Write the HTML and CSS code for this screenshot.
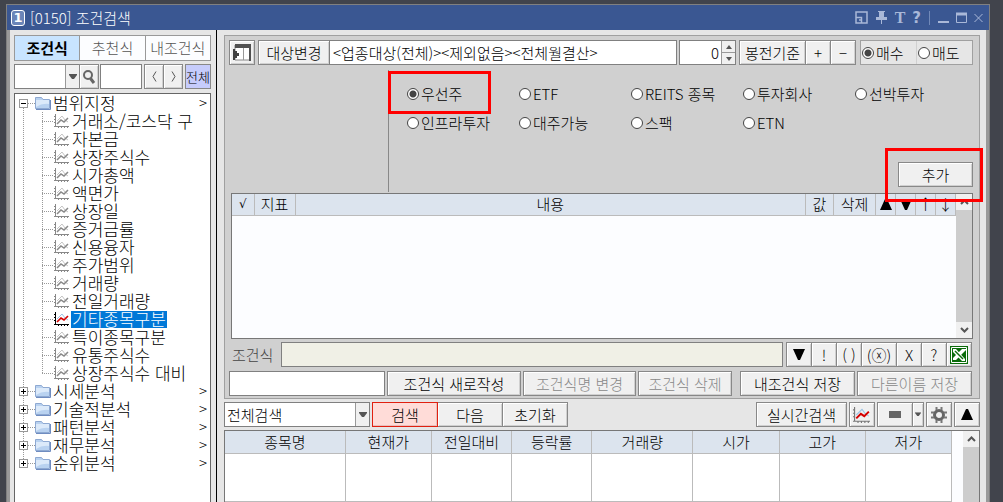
FILE: index.html
```html
<!DOCTYPE html>
<html lang="ko">
<head>
  <meta charset="UTF-8" />
  <title>[0150] 조건검색</title>
  <link rel="stylesheet" href="styles.css">
</head>
<body>
  <!-- Shared icons -->
  <svg class="symbols" aria-hidden="true">
    <symbol id="folder" viewBox="0 0 16 14">
      <path d="M0.5 12.5V1.5H6.5L8 3.5H14.5V12.5Z" fill="#b9d2f0" stroke="#8ea9d2" />
      <path d="M1 4H14V8Q7 7 1 11Z" fill="#dceafa" />
      <path d="M1 13.5H15.5V4" fill="none" stroke="#6f8cc0" />
    </symbol>
    <symbol id="chart" viewBox="0 0 16 14">
      <path d="M1.5 0V13M0 12.5H15M0 2.5H1M0 5.5H1M0 8.5H1M4.5 13V14M7.5 13V14M10.5 13V14M13.5 13V14" fill="none" stroke="currentColor" />
      <path d="M3 7L8 2L11 6L14 8" fill="none" stroke="#c4c4c4" />
      <path d="M3 10L7 6L10 8L14 4" fill="none" stroke="currentColor" stroke-width="1.5" />
    </symbol>
    <symbol id="chart-red" viewBox="0 0 16 14">
      <path d="M1.5 0V13M0 12.5H15M0 2.5H1M0 5.5H1M0 8.5H1M4.5 13V14M7.5 13V14M10.5 13V14M13.5 13V14" fill="none" stroke="currentColor" />
      <path d="M3 7L8 2L11 6L14 8" fill="none" stroke="#9cc3e4" />
      <path d="M3 10L7 6L10 8L14 4" fill="none" stroke="#d40000" stroke-width="1.7" />
    </symbol>
    <symbol id="drop" viewBox="0 0 8 6"><path d="M0 0H8V1L5 5H3L0 1Z" fill="#555" /></symbol>
    <symbol id="down" viewBox="0 0 12 11"><path d="M0 0H12L7 11H5Z" fill="#000" /></symbol>
    <symbol id="up" viewBox="0 0 12 11"><path d="M0 11H12L7 0H5Z" fill="#000" /></symbol>
    <symbol id="chev-up" viewBox="0 0 9 6"><path d="M1 5L4.5 1.5L8 5" fill="none" stroke="#555" stroke-width="2" /></symbol>
    <symbol id="chev-down" viewBox="0 0 9 6"><path d="M1 1L4.5 4.5L8 1" fill="none" stroke="#555" stroke-width="2" /></symbol>
  </svg>

  <div class="window">
    <header class="titlebar">
      <span class="badge">1</span>
      <h1>[0150] 조건검색</h1>
      <div class="title-tools">
        <button aria-label="크기"><svg width="13" height="13"><path d="M1 1H12V12H1ZM1 6.5H6.5V12M4 9H6" fill="none" stroke="#a9b8d8" stroke-width="1.5" /></svg></button>
        <button aria-label="고정"><svg width="13" height="13"><path d="M3 0H10V1H9V6H12V9H7V13H6V9H1V6H4V1H3Z" fill="#a9b8d8" /></svg></button>
        <button class="serif">T</button>
        <button class="help">?</button>
        <span class="sep"></span>
        <button aria-label="최소화"><svg width="11" height="13"><path d="M0 11H11" stroke="#a9b8d8" stroke-width="2" /></svg></button>
        <button aria-label="최대화"><svg width="11" height="13"><path d="M0.5 2V11.5H10.5V2M0 3H11" fill="none" stroke="#a9b8d8" /><path d="M0 3H11" stroke="#a9b8d8" stroke-width="3" /></svg></button>
        <button aria-label="닫기"><svg width="9" height="13"><path d="M0.5 3L8.5 11M8.5 3L0.5 11" stroke="#a9b8d8" /></svg></button>
      </div>
    </header>

    <div class="content">
      <!-- Condition tree -->
      <aside class="sidebar">
        <nav class="tabs">
          <button class="active">조건식</button>
          <button>추천식</button>
          <button>내조건식</button>
        </nav>
        <div class="tree-search">
          <div class="combo kind">
            <select aria-label="구분"><option></option></select>
            <span class="combo-arrow"><svg width="8" height="6"><use href="#drop" /></svg></span>
          </div>
          <button class="btn find" aria-label="찾기"><svg width="14" height="16"><circle cx="6" cy="6" r="4" fill="none" stroke="#666" stroke-width="2" /><path d="M8.500 9.500L12 14" stroke="#666" stroke-width="3" /></svg></button>
          <input class="field keyword" type="text" aria-label="검색어">
          <button class="btn step prev" aria-label="이전"><svg width="5" height="11"><path d="M4 0.500L1 5.500L4 10.500" fill="none" stroke="#555" /></svg></button>
          <button class="btn step" aria-label="다음"><svg width="5" height="11"><path d="M1 0.500L4 5.500L1 10.500" fill="none" stroke="#555" /></svg></button>
          <button class="btn all">전체</button>
        </div>

        <ul class="tree">
          <li>
            <div class="row"><button class="toggle open" aria-label="접기"></button><span class="dots"></span><svg width="16" height="14"><use href="#folder" /></svg><a href="#">범위지정</a><span class="more">&gt;</span></div>
            <ul>
              <li class="row"><span class="dots"></span><svg width="16" height="14"><use href="#chart" /></svg><a href="#">거래소/코스닥 구</a></li>
              <li class="row"><span class="dots"></span><svg width="16" height="14"><use href="#chart" /></svg><a href="#">자본금</a></li>
              <li class="row"><span class="dots"></span><svg width="16" height="14"><use href="#chart" /></svg><a href="#">상장주식수</a></li>
              <li class="row"><span class="dots"></span><svg width="16" height="14"><use href="#chart" /></svg><a href="#">시가총액</a></li>
              <li class="row"><span class="dots"></span><svg width="16" height="14"><use href="#chart" /></svg><a href="#">액면가</a></li>
              <li class="row"><span class="dots"></span><svg width="16" height="14"><use href="#chart" /></svg><a href="#">상장일</a></li>
              <li class="row"><span class="dots"></span><svg width="16" height="14"><use href="#chart" /></svg><a href="#">증거금률</a></li>
              <li class="row"><span class="dots"></span><svg width="16" height="14"><use href="#chart" /></svg><a href="#">신용융자</a></li>
              <li class="row"><span class="dots"></span><svg width="16" height="14"><use href="#chart" /></svg><a href="#">주가범위</a></li>
              <li class="row"><span class="dots"></span><svg width="16" height="14"><use href="#chart" /></svg><a href="#">거래량</a></li>
              <li class="row"><span class="dots"></span><svg width="16" height="14"><use href="#chart" /></svg><a href="#">전일거래량</a></li>
              <li class="row selected"><span class="dots"></span><svg width="16" height="14"><use href="#chart-red" /></svg><a href="#">기타종목구분</a></li>
              <li class="row"><span class="dots"></span><svg width="16" height="14"><use href="#chart" /></svg><a href="#">특이종목구분</a></li>
              <li class="row"><span class="dots"></span><svg width="16" height="14"><use href="#chart" /></svg><a href="#">유통주식수</a></li>
              <li class="row"><span class="dots"></span><svg width="16" height="14"><use href="#chart" /></svg><a href="#">상장주식수 대비</a></li>
            </ul>
          </li>
          <li><div class="row"><button class="toggle" aria-label="펼치기"></button><span class="dots"></span><svg width="16" height="14"><use href="#folder" /></svg><a href="#">시세분석</a><span class="more">&gt;</span></div></li>
          <li><div class="row"><button class="toggle" aria-label="펼치기"></button><span class="dots"></span><svg width="16" height="14"><use href="#folder" /></svg><a href="#">기술적분석</a><span class="more">&gt;</span></div></li>
          <li><div class="row"><button class="toggle" aria-label="펼치기"></button><span class="dots"></span><svg width="16" height="14"><use href="#folder" /></svg><a href="#">패턴분석</a><span class="more">&gt;</span></div></li>
          <li><div class="row"><button class="toggle" aria-label="펼치기"></button><span class="dots"></span><svg width="16" height="14"><use href="#folder" /></svg><a href="#">재무분석</a><span class="more">&gt;</span></div></li>
          <li><div class="row"><button class="toggle" aria-label="펼치기"></button><span class="dots"></span><svg width="16" height="14"><use href="#folder" /></svg><a href="#">순위분석</a><span class="more">&gt;</span></div></li>
        </ul>
      </aside>

      <main class="main">
        <section class="panel">
          <!-- Target -->
          <div class="bar target">
            <button class="btn square" aria-label="화면분할"><svg width="18" height="17"><path d="M2 1H17V16H2Z" fill="#fff" stroke="#888" /><path d="M2 0H18V4H2ZM16 4H18V17H16Z" fill="#505050" /><path d="M10.500 4V16" stroke="#999" /><path d="M0 5H2V7H4V9H6V12H4V14H2V16H0Z" fill="#404040" /></svg></button>
            <div class="joined grow">
              <button class="btn change">대상변경</button>
              <input class="field grow" type="text" aria-label="대상" value="&lt;업종대상(전체)&gt;&lt;제외없음&gt;&lt;전체월결산&gt;">
            </div>
            <div class="spin">
              <input type="text" aria-label="봉전" value="0">
              <div class="spin-buttons">
                <button aria-label="증가"><svg width="6" height="4"><path d="M3 0L6 4H0Z" fill="#555" /></svg></button>
                <button aria-label="감소"><svg width="6" height="4"><path d="M0 0H6L3 4Z" fill="#555" /></svg></button>
              </div>
            </div>
            <div class="joined">
              <button class="btn base">봉전기준</button>
              <button class="btn square">+</button>
              <button class="btn square">−</button>
            </div>
            <div class="side">
              <label><input type="radio" name="side" checked>매수</label>
              <label><input type="radio" name="side">매도</label>
            </div>
          </div>

          <!-- Stock kinds -->
          <div class="options">
            <div class="kinds">
              <label><input type="radio" name="kind" checked>우선주</label>
              <label><input type="radio" name="kind">ETF</label>
              <label><input type="radio" name="kind">REITS 종목</label>
              <label><input type="radio" name="kind">투자회사</label>
              <label><input type="radio" name="kind">선박투자</label>
              <label><input type="radio" name="kind">인프라투자</label>
              <label><input type="radio" name="kind">대주가능</label>
              <label><input type="radio" name="kind">스팩</label>
              <label><input type="radio" name="kind">ETN</label>
            </div>
            <button class="btn add">추가</button>
            <span class="mark mark-kind"></span>
            <span class="mark mark-add"></span>
          </div>

          <!-- Selected conditions -->
          <div class="grid conditions">
            <table>
              <thead>
                <tr>
                  <th class="c-check">√</th>
                  <th class="c-index">지표</th>
                  <th>내용</th>
                  <th class="c-value">값</th>
                  <th class="c-delete">삭제</th>
                  <th class="c-move"><svg width="12" height="11"><use href="#up" /></svg></th>
                  <th class="c-move"><svg width="12" height="11"><use href="#down" /></svg></th>
                  <th class="c-move">↑</th>
                  <th class="c-move">↓</th>
                </tr>
              </thead>
            </table>
            <div class="scrollbar">
              <svg width="9" height="6"><use href="#chev-up" /></svg>
              <span class="thumb"></span>
              <svg width="9" height="6"><use href="#chev-down" /></svg>
            </div>
          </div>

          <div class="bar formula">
            <label for="formula">조건식</label>
            <input id="formula" class="field grow" type="text" readonly>
            <div class="joined">
              <button class="btn square" aria-label="아래"><svg width="12" height="11"><use href="#down" /></svg></button>
              <button class="btn square">!</button>
              <button class="btn square">( )</button>
              <button class="btn not">(ⓧ)</button>
              <button class="btn square">X</button>
              <button class="btn square">?</button>
              <button class="btn square" aria-label="엑셀"><svg width="18" height="18"><path d="M0 0H18V18H0Z" fill="#0a6b0a" /><path d="M1.500 1.500H16.500V16.500H1.500Z" fill="none" stroke="#fff" /><path d="M3 3H6L15 13V15H12L3 6Z" fill="#fff" /><path d="M12 3H16V4L6 14H3V12Z" fill="#fff" /><path d="M5 5L13 13" stroke="#0a6b0a" stroke-width="1.5" /></svg></button>
            </div>
          </div>

          <div class="bar manage">
            <input class="field grow" type="text" aria-label="조건식명">
            <button class="btn new">조건식 새로작성</button>
            <button class="btn rename" disabled>조건식명 변경</button>
            <button class="btn remove" disabled>조건식 삭제</button>
            <button class="btn save">내조건식 저장</button>
            <button class="btn save-as" disabled>다른이름 저장</button>
          </div>
        </section>

        <!-- Results -->
        <div class="bar search">
          <div class="combo scope">
            <select aria-label="검색범위"><option>전체검색</option></select>
            <span class="combo-arrow"><svg width="8" height="6"><use href="#drop" /></svg></span>
          </div>
          <div class="joined">
            <button class="btn action primary">검색</button>
            <button class="btn action">다음</button>
            <button class="btn action">초기화</button>
          </div>
          <span class="grow"></span>
          <button class="btn live">실시간검색</button>
          <button class="btn square chart" aria-label="차트"><svg width="20" height="16" viewBox="0 0 16 14"><use href="#chart-red" /></svg></button>
          <div class="joined">
            <button class="btn view" aria-label="보기"><svg width="12" height="7"><path d="M0 0H12V7H0Z" fill="#666" /></svg></button>
            <button class="btn view-drop" aria-label="보기 선택"><svg width="6" height="5" viewBox="0 0 8 6"><use href="#drop" /></svg></button>
          </div>
          <button class="btn square" aria-label="설정"><svg width="16" height="16"><circle cx="8" cy="8" r="4.500" fill="none" stroke="#666" stroke-width="3" /><path d="M5.500 0V3M10.500 0V3M5.500 13V16M10.500 13V16M0 5.500H3M0 10.500H3M13 5.500H16M13 10.500H16" stroke="#777" stroke-width="2" /></svg></button>
          <button class="btn square" aria-label="위"><svg width="12" height="11"><use href="#up" /></svg></button>
        </div>

        <div class="grid results">
          <table>
            <thead>
              <tr>
                <th class="r-name">종목명</th>
                <th class="r-mid">현재가</th>
                <th class="r-small">전일대비</th>
                <th class="r-small">등락률</th>
                <th class="r-volume">거래량</th>
                <th class="r-mid">시가</th>
                <th class="r-mid">고가</th>
                <th class="r-mid">저가</th>
              </tr>
            </thead>
            <tbody>
              <tr><td></td><td></td><td></td><td></td><td></td><td></td><td></td><td></td></tr>
              <tr><td></td><td></td><td></td><td></td><td></td><td></td><td></td><td></td></tr>
            </tbody>
          </table>
          <div class="scrollbar">
            <svg width="9" height="6"><use href="#chev-up" /></svg>
            <span class="thumb"></span>
          </div>
        </div>
      </main>
    </div>
  </div>
</body>
</html>
```
FILE: styles.css
```css
* {
  box-sizing: border-box;
}

body {
  margin: 0;
  height: 100vh;
  overflow: hidden;
  padding: 4px 13px 0 6px;
  background: #41444c;
  font: 300 15px/18px "Noto Sans CJK KR", sans-serif;
  color: #000;
}

button, input, select {
  font: inherit;
  color: inherit;
  margin: 0;
  padding: 0;
}

svg {
  display: block;
  flex: none;
}

.symbols {
  display: none;
}

.window {
  height: 100%;
  display: flex;
  flex-direction: column;
  border: 1px solid #808080;
  border-bottom: none;
}

/* Title bar */
.titlebar {
  height: 25px;
  flex: none;
  display: flex;
  align-items: center;
  gap: 5px;
  padding: 0 6px 0 4px;
  background: #3a5792;
  color: #fff;
}

.badge {
  width: 14px;
  height: 16px;
  border: 1px solid #fff;
  border-radius: 3px;
  background: #6b85b8;
  font: bold 13px/14px "DejaVu Sans", sans-serif;
  text-align: center;
}

.titlebar h1 {
  flex: 1;
  margin: 0;
  font-size: 15px;
  font-weight: 300;
}

.title-tools {
  display: flex;
  align-items: center;
  gap: 7px;
}

.title-tools button {
  border: none;
  background: none;
  color: #a9b8d8;
}

.title-tools .serif {
  font: bold 16px/18px "Liberation Serif", serif;
}

.title-tools .help {
  font: bold 15px/18px "DejaVu Sans", sans-serif;
}

.sep {
  width: 1px;
  height: 14px;
  margin: 0 1px;
  background: #7189b8;
}

/* Layout */
.content {
  flex: 1;
  min-height: 0;
  display: flex;
  background: #e6e6e6;
  border: solid #999;
  border-width: 0 3px;
}

.sidebar {
  width: 207px;
  flex: none;
  display: flex;
  flex-direction: column;
  padding: 5px 5px 0 4px;
  border-right: 1px solid #000;
}

.main {
  flex: 1;
  min-width: 0;
  display: flex;
  flex-direction: column;
  padding: 5px 6px 0 7px;
}

/* Controls */
.btn {
  height: 25px;
  flex: none;
  display: flex;
  align-items: center;
  justify-content: center;
  border: 1px solid #888;
  background: #f0f0f0;
  box-shadow: inset 1px 1px #fff, inset -1px -1px #d0d0d0;
  white-space: nowrap;
  cursor: pointer;
}

.btn:disabled {
  color: #888;
  cursor: default;
}

.square {
  width: 26px;
}

.field {
  height: 25px;
  min-width: 0;
  padding: 0 3px;
  border: 1px solid #808080;
  border-radius: 0;
  background: #fff;
}

.grow {
  flex: 1;
}

.bar {
  display: flex;
  gap: 2px;
}

.joined {
  display: flex;
}

.joined > * + * {
  margin-left: -1px;
}

.combo {
  height: 25px;
  display: flex;
  border: 1px solid #808080;
  background: #fff;
}

.combo select {
  flex: 1;
  min-width: 0;
  padding: 0 2px;
  border: none;
  background: none;
  appearance: none;
}

.combo-arrow {
  width: 14px;
  display: flex;
  align-items: center;
  justify-content: center;
  border-left: 1px solid #999;
  background: #f0f0f0;
}

label {
  display: flex;
  align-items: center;
  gap: 2px;
  white-space: nowrap;
}

input[type="radio"] {
  width: 12px;
  height: 12px;
  flex: none;
  appearance: none;
  border: 1px solid #444;
  border-radius: 50%;
  background: #fff;
}

input[type="radio"]:checked {
  background: radial-gradient(circle, #444 3px, #fff 4px);
}

/* Sidebar */
.tabs {
  display: flex;
  height: 26px;
  border: 1px solid #999;
}

.tabs button {
  flex: 1;
  border: none;
  background: #fcfdff;
  color: #555;
}

.tabs button + button {
  border-left: 1px solid #999;
}

.tabs .active {
  background: #c8e4ff;
  color: #000;
  font-weight: bold;
}

.tree-search {
  display: flex;
  margin: 3px 0 4px;
}

.kind {
  flex: 1;
}

.find {
  width: 20px;
  margin-left: -1px;
}

.keyword {
  width: 42px;
  margin: 0 2px 0 1px;
}

.step {
  width: 20px;
}

.prev {
  margin-right: -1px;
}

.all {
  width: 26px;
  margin-left: 2px;
  background: #c6ccfc;
  box-shadow: none;
  font-size: 13px;
}

.tree {
  flex: 1;
  min-height: 0;
  overflow: hidden;
  padding-left: 4px;
  border: 1px solid #666;
  border-bottom: none;
  background: #fff;
  font-size: 17px;
}

.tree, .tree ul {
  margin: 0;
  list-style: none;
}

.tree ul {
  padding: 0 0 0 23px;
}

.tree > li {
  background: repeating-linear-gradient(#999 0 1px, transparent 1px 2px) 4px 0 / 1px 100% no-repeat;
}

.tree > li:first-child {
  background-position-y: 10px;
}

.tree > li:last-child {
  background-size: 1px 9px;
}

.tree ul .row {
  background: repeating-linear-gradient(#999 0 1px, transparent 1px 2px) 0 0 / 1px 100% no-repeat;
}

.tree ul .row:last-child {
  background-size: 1px 9px;
}

.row {
  height: 18px;
  display: flex;
  align-items: center;
}

.row a {
  height: 17px;
  line-height: 16px;
  padding: 0 1px;
  margin-left: 1px;
  color: #000;
  text-decoration: none;
  white-space: nowrap;
}

.row svg {
  color: #888;
}

.selected svg {
  color: #000;
}

.selected a {
  background: #0078d7;
  color: #fff;
}

.dots {
  width: 7px;
  height: 1px;
  background: repeating-linear-gradient(90deg, #999 0 1px, transparent 1px 2px);
}

.tree ul .dots {
  width: 12px;
}

.toggle {
  width: 9px;
  height: 9px;
  border: 1px solid #999;
  background: linear-gradient(#000, #000) center / 5px 1px no-repeat, linear-gradient(#000, #000) center / 1px 5px no-repeat, #fff;
}

.toggle.open {
  background: linear-gradient(#000, #000) center / 5px 1px no-repeat, #fff;
}

.more {
  margin-left: auto;
  padding-right: 3px;
  font-size: 15px;
}

/* Condition panel */
.panel {
  border: 1px solid #a0a0a0;
  background: #d0d0d0;
  padding: 4px 6px 2px 4px;
}

.target > .joined {
  margin-left: 1px;
}

.change {
  width: 72px;
}

.base {
  width: 67px;
}

.spin {
  width: 57px;
  height: 25px;
  display: flex;
  border: 1px solid #808080;
  background: #fff;
}

.spin input {
  flex: 1;
  min-width: 0;
  padding-right: 2px;
  border: none;
  background: none;
  text-align: right;
}

.spin-buttons {
  width: 14px;
  display: flex;
  flex-direction: column;
  border-left: 1px solid #999;
}

.spin-buttons button {
  flex: 1;
  display: flex;
  align-items: center;
  justify-content: center;
  border: none;
  background: #f0f0f0;
}

.spin-buttons button + button {
  border-top: 1px solid #999;
}

.side {
  width: 113px;
  height: 25px;
  margin-left: 2px;
  display: flex;
  border: 1px solid #a0a0a0;
  background: #e6e6e6;
}

.side label {
  flex: 1;
  padding-left: 1px;
}

.side label + label {
  border-left: 1px solid #d0d0d0;
}

.options {
  position: relative;
  display: flex;
  flex-direction: column;
  align-items: flex-end;
  height: 128px;
}

.kinds {
  align-self: stretch;
  height: 122px;
  margin: 5px 0 0 159px;
  padding: 9px 0 0 18px;
  display: grid;
  grid-template-columns: repeat(5, 112px);
  grid-auto-rows: 29px;
  align-content: start;
  border-left: 1px solid #888;
}

.add {
  width: 75px;
  margin-top: -30px;
}

.mark {
  position: absolute;
  border: 3px solid #f00;
  pointer-events: none;
}

.mark-kind {
  left: 159px;
  top: 6px;
  width: 103px;
  height: 43px;
}

.mark-add {
  right: -10px;
  top: 83px;
  width: 98px;
  height: 54px;
}

/* Tables */
.grid {
  display: flex;
  align-items: flex-start;
  border: 1px solid #777;
  background: #fcfdff;
}

table {
  flex: 1;
  width: 100%;
  table-layout: fixed;
  border-collapse: collapse;
}

th, td {
  padding: 0;
  border: solid #bbb;
  border-width: 0 1px 1px 0;
}

th {
  height: 21px;
  background: #dce4ee;
  font-weight: 300;
}

th svg {
  margin: auto;
}

.conditions {
  height: 146px;
  margin-left: 2px;
}

.c-check {
  width: 22px;
  font: 12px/18px "DejaVu Sans", sans-serif;
}

.c-index { width: 41px; }
.c-value { width: 28px; }
.c-delete { width: 42px; }
.c-move { width: 20px; }

.scrollbar {
  width: 16px;
  height: 100%;
  flex: none;
  display: flex;
  flex-direction: column;
  align-items: center;
  padding: 5px 0;
  gap: 5px;
  background: #f0f0f0;
}

.thumb {
  flex: 1;
  width: 100%;
  background: #cdcdcd;
}

.formula {
  gap: 3px;
  margin: 3px 1px 4px 3px;
}

.formula label {
  width: 46px;
  color: #444;
}

.formula .field {
  background: #f0f0e6;
}

.not {
  width: 36px;
}

.manage {
  margin-right: 1px;
}

.new { width: 134px; }
.rename { width: 113px; }
.remove { width: 94px; }
.save { width: 115px; margin-left: 6px; }
.save-as { width: 115px; }

/* Results */
.search {
  margin: 3px 0;
}

.scope {
  width: 146px;
}

.action {
  width: 66px;
}

.action.primary {
  z-index: 1;
  border-color: #e02010;
  background: #ffdcd8;
  box-shadow: inset -1px -1px #e8c0bc;
}

.live {
  width: 91px;
}

.chart {
  color: #777;
}

.view {
  width: 36px;
}

.view-drop {
  width: 12px;
}

.results {
  flex: 1;
  min-height: 0;
  overflow: hidden;
  border-bottom: none;
}

.results th {
  height: 22px;
}

.results td {
  height: 48px;
  background: #fff;
}

.results .scrollbar {
  margin-left: 11px;
  padding-bottom: 0;
}

.r-name { width: 120px; }
.r-mid { width: 86px; }
.r-small { width: 80px; }
.r-volume { width: 101px; }
```
